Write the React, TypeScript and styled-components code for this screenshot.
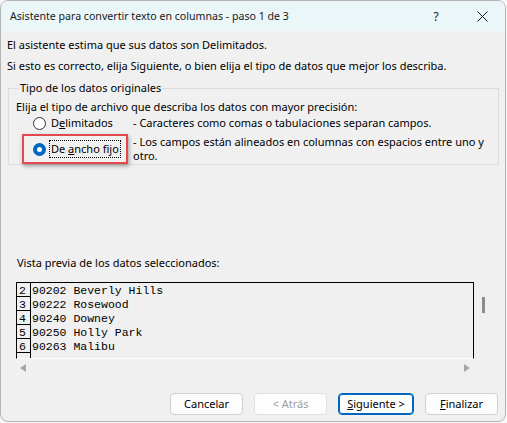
import React from 'react';
import styled, { createGlobalStyle } from 'styled-components';

const GlobalStyle = createGlobalStyle`
  html, body {
    margin: 0;
    padding: 0;
    background: #f7f7f7;
  }
  body {
    font-family: "Noto Sans", "Open Sans", sans-serif;
    font-size: 11px;
    color: #000;
  }
`;

const uiFont = `"Noto Sans", "Open Sans", sans-serif`;

const Window = styled.div`
  width: 504px;
  height: 420px;
  border: 1px solid #b4b4b4;
  border-radius: 8px;
  overflow: hidden;
  background: #f0f0f0;
  display: flex;
  flex-direction: column;
  font-family: ${uiFont};
  font-size: 11px;
`;

const TitleBar = styled.div`
  height: 30px;
  flex: none;
  display: flex;
  align-items: center;
  background: #eaf6f7;
  padding-left: 9px;
`;

const Title = styled.div`
  flex: 1;
  font-size: 10.6px;
  line-height: 16px;
  color: #1a1a1a;
`;

const TitleButton = styled.div`
  width: 46px;
  height: 30px;
  display: flex;
  align-items: center;
  justify-content: center;
  font-size: 12px;
  color: #1a1a1a;
`;

const Content = styled.div`
  flex: 1;
  display: flex;
  flex-direction: column;
  padding: 0 6px 6px 6px;
`;

const Paragraph = styled.div<{ $top: number }>`
  margin-top: ${p => p.$top}px;
  line-height: 16px;
`;

const GroupBox = styled.fieldset`
  margin: 6px 0 0 1px;
  padding: 3px 0 1px 7px;
  border: 1px solid #dcdcdc;
  border-radius: 0;
`;

const Legend = styled.legend`
  padding: 0 1px;
  margin-left: 3px;
  line-height: 16px;
`;

const Prompt = styled.div`
  line-height: 16px;
`;

const OptionRow = styled.div<{ $top: number }>`
  display: grid;
  grid-template-columns: 100px 360px;
  align-items: center;
  margin: ${p => p.$top}px 0 0 17px;
`;

const OptionLabel = styled.label<{ $highlight?: boolean }>`
  position: relative;
  display: flex;
  align-items: center;
  gap: 4px;
  line-height: 16px;
  &::after {
    content: '';
    display: ${p => (p.$highlight ? 'block' : 'none')};
    position: absolute;
    left: -11px;
    top: -7px;
    width: 102px;
    height: 26px;
    border: 2px solid #e5484d;
    box-shadow: 1px 2px 4px rgba(0, 0, 0, 0.35);
  }
`;

const Radio = styled.span<{ $checked?: boolean }>`
  width: 13px;
  height: 13px;
  border-radius: 50%;
  box-sizing: border-box;
  flex: none;
  border: ${p => (p.$checked ? '4px solid #0067c0' : '1px solid #333')};
  background: #fff;
`;

const Caption = styled.span<{ $focused?: boolean }>`
  padding: 0 1px;
  outline: ${p => (p.$focused ? '1px dotted #000' : 'none')};
  outline-offset: 0;
`;

const Description = styled.div`
  line-height: 14px;
`;

const PreviewLabel = styled.div`
  margin: 90px 0 0 10px;
  line-height: 16px;
`;

const PreviewArea = styled.div`
  display: flex;
  margin: 11px 0 0 9px;
`;

const PreviewBox = styled.div`
  width: 456px;
  height: 75px;
  border: 1px solid #000;
  border-bottom: 1px solid #fff;
  overflow: hidden;
  display: flex;
  flex-direction: column;
  font-family: "Liberation Mono", "Courier New", monospace;
  font-size: 11.5px;
`;

const DataRow = styled.div`
  display: flex;
  height: 14px;
  flex: none;
  line-height: 14px;
`;

const RowNumber = styled.div`
  width: 11px;
  padding-left: 2px;
  border-right: 1px solid #000;
  border-bottom: 1px solid #000;
  box-sizing: content-box;
  height: 13px;
  line-height: 15px;
`;

const RowText = styled.div`
  padding-left: 1px;
  white-space: pre;
  line-height: 16px;
`;

const VScroll = styled.div`
  width: 24px;
  display: flex;
  justify-content: flex-start;
  padding: 15px 0 0 8px;
  box-sizing: border-box;
`;

const Thumb = styled.div`
  width: 3px;
  height: 16px;
  background: #8c8c8c;
`;

const HScroll = styled.div`
  display: flex;
  justify-content: space-between;
  align-items: center;
  width: 450px;
  height: 14px;
  margin: 2px 0 0 13px;
`;

const Arrow = styled.span<{ $dir: 'left' | 'right' }>`
  width: 0;
  height: 0;
  border-top: 4px solid transparent;
  border-bottom: 4px solid transparent;
  ${p =>
    p.$dir === 'left'
      ? 'border-right: 6px solid #a6a6a6;'
      : 'border-left: 6px solid #a6a6a6;'}
`;

const Footer = styled.div`
  margin-top: auto;
  display: flex;
  justify-content: flex-end;
  gap: 11px;
  padding-right: 1px;
`;

const Button = styled.button<{ $primary?: boolean; $width?: number }>`
  width: ${p => p.$width ?? 73}px;
  height: 22px;
  box-sizing: border-box;
  font-family: ${uiFont};
  font-size: 11px;
  line-height: 16px;
  padding: 0;
  border-radius: 4px;
  background: #fdfdfd;
  color: #000;
  border: 1px solid ${p => (p.$primary ? '#0067c0' : '#d0d0d0')};
  box-shadow: ${p => (p.$primary ? 'inset 0 0 0 1px #0067c0' : 'none')};
  &:disabled {
    color: #9d9d9d;
    border-color: #e0e0e0;
  }
`;

const rows = [
  ['2', '90202 Beverly Hills'],
  ['3', '90222 Rosewood'],
  ['4', '90240 Downey'],
  ['5', '90250 Holly Park'],
  ['6', '90263 Malibu'],
  ['', ''],
];

const CloseIcon = () => (
  <svg width="11" height="11" viewBox="0 0 11 11">
    <path d="M0.5 0.5 L10.5 10.5 M10.5 0.5 L0.5 10.5" stroke="#1a1a1a" strokeWidth="1" />
  </svg>
);

export default function App() {
  return (
    <>
      <GlobalStyle />
      <Window>
        <TitleBar>
          <Title>Asistente para convertir texto en columnas - paso 1 de 3</Title>
          <TitleButton>?</TitleButton>
          <TitleButton>
            <CloseIcon />
          </TitleButton>
        </TitleBar>
        <Content>
          <Paragraph $top={6}>El asistente estima que sus datos son Delimitados.</Paragraph>
          <Paragraph $top={5}>
            Si esto es correcto, elija Siguiente, o bien elija el tipo de datos que mejor los describa.
          </Paragraph>
          <GroupBox>
            <Legend>Tipo de los datos originales</Legend>
            <Prompt>Elija el tipo de archivo que describa los datos con mayor precisión:</Prompt>
            <OptionRow $top={0}>
              <OptionLabel>
                <Radio />
                <Caption>
                  D<u>e</u>limitados
                </Caption>
              </OptionLabel>
              <Description>- Caracteres como comas o tabulaciones separan campos.</Description>
            </OptionRow>
            <OptionRow $top={4}>
              <OptionLabel $highlight>
                <Radio $checked />
                <Caption $focused>
                  De <u>a</u>ncho fijo
                </Caption>
              </OptionLabel>
              <Description>
                - Los campos están alineados en columnas con espacios entre uno y
                <br />
                otro.
              </Description>
            </OptionRow>
          </GroupBox>
          <PreviewLabel>Vista previa de los datos seleccionados:</PreviewLabel>
          <PreviewArea>
            <PreviewBox>
              {rows.map(([n, text], i) => (
                <DataRow key={i}>
                  <RowNumber>{n}</RowNumber>
                  <RowText>{text}</RowText>
                </DataRow>
              ))}
            </PreviewBox>
            <VScroll>
              <Thumb />
            </VScroll>
          </PreviewArea>
          <HScroll>
            <Arrow $dir="left" />
            <Arrow $dir="right" />
          </HScroll>
          <Footer>
            <Button>Cancelar</Button>
            <Button disabled>&lt; Atrás</Button>
            <Button $primary $width={76}>
              <u>S</u>iguiente &gt;
            </Button>
            <Button>
              <u>F</u>inalizar
            </Button>
          </Footer>
        </Content>
      </Window>
    </>
  );
}
